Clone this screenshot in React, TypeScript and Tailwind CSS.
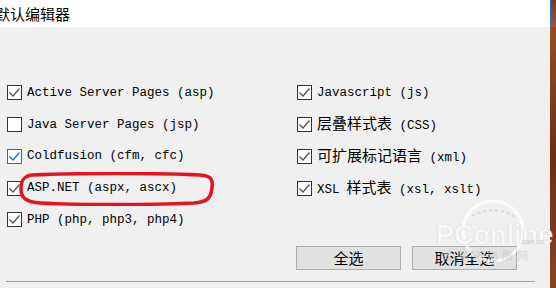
import React from 'react';

type Part = { t: string; cjk?: boolean };

interface Item {
  parts: Part[];
  checked: boolean;
  focused?: boolean;
}

const leftItems: Item[] = [
  { parts: [{ t: 'Active Server Pages (asp)' }], checked: true },
  { parts: [{ t: 'Java Server Pages (jsp)' }], checked: false },
  { parts: [{ t: 'Coldfusion (cfm, cfc)' }], checked: true, focused: true },
  { parts: [{ t: 'ASP.NET (aspx, ascx)' }], checked: true },
  { parts: [{ t: 'PHP (php, php3, php4)' }], checked: true },
];

const rightItems: Item[] = [
  { parts: [{ t: 'Javascript (js)' }], checked: true },
  { parts: [{ t: '层叠样式表', cjk: true }, { t: ' (CSS)' }], checked: true },
  { parts: [{ t: '可扩展标记语言', cjk: true }, { t: ' (xml)' }], checked: true },
  { parts: [{ t: 'XSL' }, { t: '样式表', cjk: true }, { t: ' (xsl, xslt)' }], checked: true },
];

const mono = 'font-["Liberation_Mono","Noto_Sans_CJK_SC",monospace]';

function CheckBox({ checked, focused }: { checked: boolean; focused?: boolean }) {
  return (
    <div
      className={`w-[15px] h-[15px] shrink-0 bg-white border flex items-center justify-center ${
        focused ? 'border-[#0078d7]' : 'border-[#333333]'
      }`}
    >
      {checked && (
        <svg width="13" height="13" viewBox="0 0 13 13">
          <path d="M1.5 6.5 L5 10 L11.5 2.5" fill="none" stroke={focused ? '#0078d7' : '#555555'} strokeWidth="1.3" />
        </svg>
      )}
    </div>
  );
}

function Row({ item }: { item: Item }) {
  return (
    <div className="h-[31.75px] flex items-center gap-[5px]">
      <CheckBox checked={item.checked} focused={item.focused} />
      <span className={`${mono} text-[12.5px] text-black whitespace-pre leading-[16px]`}>
        {item.parts.map((p, i) =>
          p.cjk ? (
            <span key={i} className={`font-["Noto_Sans_CJK_SC",sans-serif] text-[15px] ${i > 0 ? 'ml-[7px]' : ''}`}>
              {p.t}
            </span>
          ) : (
            <span key={i}>{p.t}</span>
          )
        )}
      </span>
    </div>
  );
}

function Button({ label }: { label: string }) {
  return (
    <button className='w-[105px] h-[24px] bg-[#e1e1e1] border border-[#adadad] text-[15px] text-black leading-none font-["Noto_Sans_CJK_SC",sans-serif] flex items-center justify-center'>
      {label}
    </button>
  );
}

export default function App() {
  return (
    <div className="w-[556px] h-[288px] flex overflow-hidden bg-[#efefef]">
      <div className="w-[550px] h-full flex flex-col relative">
        <div className="h-[27px] bg-white flex items-center">
          <span className='ml-[-5px] text-[15px] text-black font-["Noto_Sans_CJK_SC",sans-serif] leading-none'>
            默认编辑器
          </span>
        </div>

        <div className="flex-1 bg-[#f0f0f0] flex flex-col">
          <div className="flex pt-[50px] pl-[7px]">
            <div className="w-[290px] flex flex-col">
              {leftItems.map((it, i) => (
                <Row key={i} item={it} />
              ))}
            </div>
            <div className="flex flex-col">
              {rightItems.map((it, i) => (
                <Row key={i} item={it} />
              ))}
            </div>
          </div>

          <div className="flex gap-[11px] pl-[296px] mt-[10px]">
            <Button label="全选" />
            <Button label="取消全选" />
          </div>

          <div className="mt-[11px] ml-[6px] w-[529px] h-[1px] bg-[#a0a0a0]" />
        </div>

        {/* red annotation */}
        <svg className="absolute left-[18px] top-[172px]" width="197" height="34" viewBox="0 0 197 34">
          <path
            d="M14 3 C60 1 140 1 182 3 C194 4 195 8 194 16 C193 27 188 30 176 31 C130 33 60 33 22 31 C8 30 3 26 3 17 C3 8 6 4 14 3 Z"
            fill="none"
            stroke="#e5141d"
            strokeWidth="3.5"
          />
        </svg>

        {/* watermark */}
        <div className="absolute left-[436px] top-[198px] w-[112px] h-[70px] pointer-events-none">
          <svg className="absolute left-[22px] top-[0px]" width="70" height="66" viewBox="0 0 70 66">
            <circle cx="35" cy="33" r="30" fill="none" stroke="#ffffff" strokeOpacity="0.75" strokeWidth="3" />
            <path d="M14 18 C30 10 45 10 58 20" fill="none" stroke="#d8d8d8" strokeWidth="2" strokeDasharray="3 3" />
          </svg>
          <span className='absolute left-[0px] top-[24px] text-[27px] font-bold text-white/90 leading-none font-["Liberation_Sans",sans-serif] [text-shadow:0_0_1px_#b0b0b0]'>
            PConline
          </span>
          <span className='absolute left-[84px] top-[40px] text-[7px] text-[#c8c8c8] leading-none font-["Liberation_Sans",sans-serif]'>
            .com.cn
          </span>
          <span className='absolute left-[6px] top-[52px] text-[11px] tracking-[4px] text-[#c4c4c4]/70 leading-none font-["Noto_Sans_CJK_SC",sans-serif]'>
            太平洋电脑网
          </span>
        </div>
      </div>
      <div className="w-[6px] h-full flex flex-col">
        <div className="h-[27px] w-full flex">
          <div className="w-[1px] bg-[#1e73c8]" />
          <div className="flex-1 bg-gradient-to-b from-[#7a3a1c] to-[#a4552c]" />
        </div>
        <div className="flex-1 pl-[1px] bg-gradient-to-b from-[#9b4b22] via-[#6b2e14] to-[#8a4520]" />
      </div>
    </div>
  );
}
